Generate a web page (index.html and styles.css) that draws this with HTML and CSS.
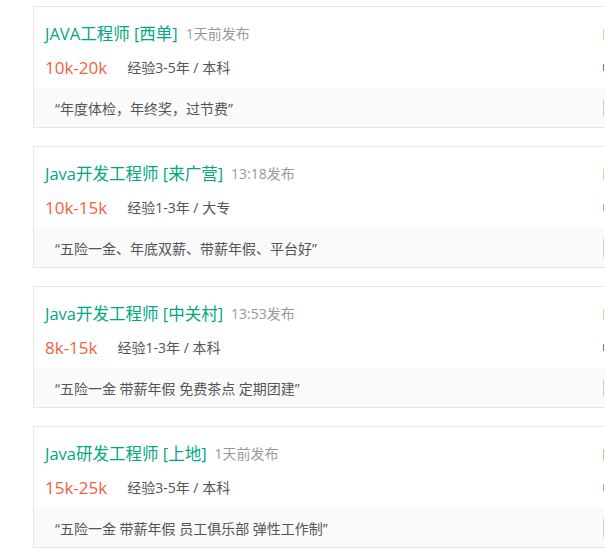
FILE: index.html
```html
<!DOCTYPE html>
<html lang="zh-CN">
<head>
    <meta charset="UTF-8">
    <meta name="viewport" content="width=device-width, initial-scale=1.0">
    <title>职位列表</title>
    <link rel="stylesheet" href="styles.css">
</head>
<body>
    <ul class="job-list">
        <li class="job-item">
            <div class="job-top">
                <div class="job-position">
                    <div class="job-title">
                        <a href="#" class="job-name">JAVA工程师 [西单]</a>
                        <span class="job-time">1天前发布</span>
                    </div>
                    <div class="job-info">
                        <span class="job-money">10k-20k</span>
                        <span class="job-require">经验3-5年 / 本科</span>
                    </div>
                </div>
                <div class="job-company">
                    <span class="company-name"></span>
                    <span class="company-industry"></span>
                </div>
            </div>
            <div class="job-bottom">
                <div class="job-welfare">“年度体检，年终奖，过节费”</div>
                <div class="job-tags"><span class="tag"></span></div>
            </div>
        </li>
        <li class="job-item">
            <div class="job-top">
                <div class="job-position">
                    <div class="job-title">
                        <a href="#" class="job-name">Java开发工程师 [来广营]</a>
                        <span class="job-time">13:18发布</span>
                    </div>
                    <div class="job-info">
                        <span class="job-money">10k-15k</span>
                        <span class="job-require">经验1-3年 / 大专</span>
                    </div>
                </div>
                <div class="job-company">
                    <span class="company-name"></span>
                    <span class="company-industry alt"></span>
                </div>
            </div>
            <div class="job-bottom">
                <div class="job-welfare">“五险一金、年底双薪、带薪年假、平台好”</div>
                <div class="job-tags"><span class="tag"></span></div>
            </div>
        </li>
        <li class="job-item">
            <div class="job-top">
                <div class="job-position">
                    <div class="job-title">
                        <a href="#" class="job-name">Java开发工程师 [中关村]</a>
                        <span class="job-time">13:53发布</span>
                    </div>
                    <div class="job-info">
                        <span class="job-money">8k-15k</span>
                        <span class="job-require">经验1-3年 / 本科</span>
                    </div>
                </div>
                <div class="job-company">
                    <span class="company-name"></span>
                    <span class="company-industry"></span>
                </div>
            </div>
            <div class="job-bottom">
                <div class="job-welfare">“五险一金 带薪年假 免费茶点 定期团建”</div>
                <div class="job-tags"><span class="tag"></span></div>
            </div>
        </li>
        <li class="job-item">
            <div class="job-top">
                <div class="job-position">
                    <div class="job-title">
                        <a href="#" class="job-name">Java研发工程师 [上地]</a>
                        <span class="job-time">1天前发布</span>
                    </div>
                    <div class="job-info">
                        <span class="job-money">15k-25k</span>
                        <span class="job-require">经验3-5年 / 本科</span>
                    </div>
                </div>
                <div class="job-company">
                    <span class="company-name gold"></span>
                    <span class="company-industry alt"></span>
                </div>
            </div>
            <div class="job-bottom">
                <div class="job-welfare">“五险一金 带薪年假 员工俱乐部 弹性工作制”</div>
                <div class="job-tags"><span class="tag"></span></div>
            </div>
        </li>
    </ul>
</body>
</html>
```

FILE: styles.css
```css
* {
    margin: 0;
    padding: 0;
    box-sizing: border-box;
}

body {
    font-family: 'Segoe UI', 'Open Sans', 'Noto Sans CJK SC', sans-serif;
    background: #fff;
    padding: 6px 0 0 33px;
    overflow: hidden;
}

.job-list {
    list-style: none;
    width: 900px;
}

.job-item {
    border: 1px solid #e6e6e6;
    margin-bottom: 18px;
    height: 122px;
}

.job-top {
    display: flex;
    height: 81px;
}

.job-position {
    width: 569px;
    padding: 15px 0 0 11px;
}

.job-title {
    display: flex;
    align-items: center;
    height: 22px;
    white-space: nowrap;
}

.job-name {
    color: #00a880;
    font-size: 16.5px;
    text-decoration: none;
    margin-right: 8px;
}

.job-time {
    color: #999;
    font-size: 14px;
}

.job-info {
    display: flex;
    align-items: center;
    height: 22px;
    margin-top: 12px;
    white-space: nowrap;
}

.job-money {
    color: #f0623f;
    font-size: 17px;
    margin-right: 20px;
}

.job-require {
    color: #555;
    font-size: 14px;
}

.job-company {
    display: flex;
    flex-direction: column;
    padding-top: 22px;
}

.company-name {
    display: block;
    width: 12px;
    height: 11px;
    border-left: 1px solid #e2d27e;
}

.company-name.gold { border-color: #eab95a; }

.company-industry {
    display: block;
    width: 12px;
    height: 7px;
    margin-top: 24px;
    border-left: 1px solid #a0685a;
}

.company-industry.alt { border-color: #e0a060; }

.job-bottom {
    display: flex;
    align-items: center;
    height: 39px;
    background: #fafafa;
}

.job-welfare {
    width: 569px;
    padding-left: 21px;
    color: #555;
    font-size: 14px;
    white-space: nowrap;
}

.job-tags { display: flex; }

.tag {
    display: inline-block;
    width: 20px;
    height: 18px;
    border-left: 1px solid #cfcfcf;
}
```
